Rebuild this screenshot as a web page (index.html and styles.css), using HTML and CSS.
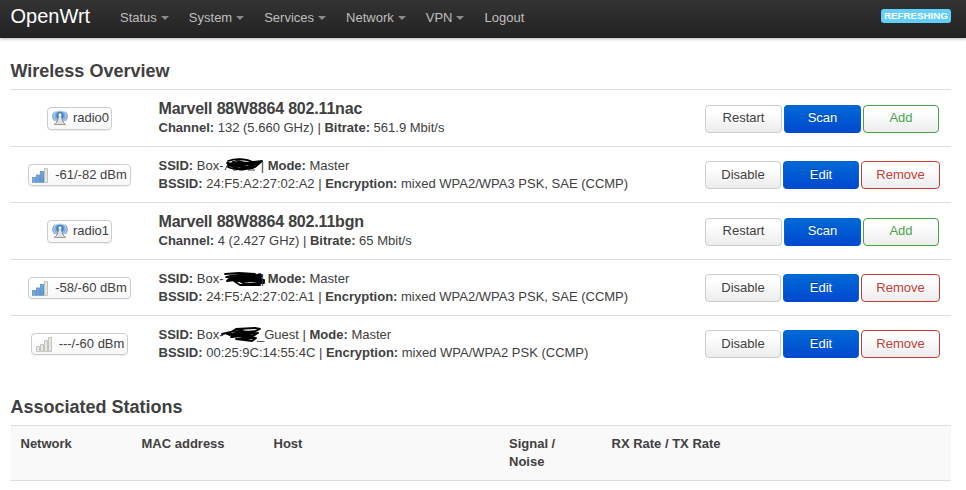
FILE: index.html
```
<!DOCTYPE html>
<html lang="en">
<head>
<meta charset="utf-8">
<title>OpenWrt - Wireless Overview</title>
<link rel="stylesheet" href="styles.css">
</head>
<body>
<svg class="defs" width="0" height="0">
  <defs>
    <linearGradient id="blue" x1="0" x2="1" y1="0" y2="1"><stop offset="0" stop-color="#91b8e2"/><stop offset="1" stop-color="#5b92d0"/></linearGradient>
    <symbol id="radio" viewBox="0 0 16 16">
      <ellipse cx="8" cy="6.5" rx="7.8" ry="6" fill="#b5cbe6"/>
      <g fill="none" stroke="#79a2d2" stroke-width="1">
        <path d="M2.6 1.5Q-1 6.3 2.6 11.2M13.4 1.5Q17 6.3 13.4 11.2"/>
        <path d="M4.8 2.2Q1.5 6 4.5 10.2M11.2 2.2Q14.5 6 11.5 10.2"/>
      </g>
      <circle cx="8" cy="5.8" r="4" fill="#4b84c6"/>
      <circle cx="8" cy="4.7" r="1.5" fill="#e7eff7"/>
      <path d="M7.5 6 4 13.7M8.5 6l3.500 7.700" fill="none" stroke="#8c9199" stroke-width="1"/>
      <path d="M7.2 6h1.6l1.700 7h-5z" fill="#dfe3e7"/>
      <path d="M2.5 13.2h11l.5 1.8H2z" fill="#9b9b98"/>
      <path d="M4 13.5h8" stroke="#ddd"/>
    </symbol>
    <symbol id="bars" viewBox="0 0 16 16">
      <path d="M0 15.500V10h4V7.500h4V4h4v11.500z" fill="url(#blue)"/>
      <path d="M.5 15.500v-5h3v5M4.500 15.500v-7h3v7M8.500 15.500v-11h3v11M0 15.500h12" fill="none" stroke="#5f90c8" stroke-opacity=".5"/>
      <path d="M12.500 1.500h3v14h-3z" fill="#e7e7e2" stroke="#c4c4be"/>
    </symbol>
  </defs>
</svg>
<header class="navbar">
  <a class="brand">OpenWrt</a>
  <nav class="menu">
    <a class="drop">Status</a><a class="drop">System</a><a class="drop">Services</a><a class="drop">Network</a><a class="drop">VPN</a><a>Logout</a>
  </nav>
  <span class="status">REFRESHING</span>
</header>
<main class="content">
  <h3>Wireless Overview</h3>
  <section class="radios">
    <div class="row device">
      <div class="cell-badge"><span class="badge"><svg class="icon" width="16" height="16"><use href="#radio"/></svg>radio0</span></div>
      <div class="info"><b class="name">Marvell 88W8864 802.11nac</b><br><b>Channel:</b> 132 (5.660 GHz) | <b>Bitrate:</b> 561.9 Mbit/s</div>
      <div class="actions"><button>Restart</button><button class="primary">Scan</button><button class="add">Add</button></div>
    </div>
    <div class="row">
      <div class="cell-badge"><span class="badge signal"><svg class="icon" width="16" height="16"><use href="#bars"/></svg>-61/-82 dBm</span></div>
      <div class="info"><b>SSID:</b> Box-<span class="redacted"><svg width="46" height="16" viewBox="0 -1 46 16"><path d="M1 12 5 4M9 12h4M15 12h5M24 12h7"/><path class="ink" d="M4 3C12 0 23 1 29 4L38 3 31 9C24 12 10 12 4 9L9 4 29 6 8 7 20 10 36 4 12 5 4 7 16 11 32 8M12 2 28 7M3 5 29 10"/></svg></span> | <b>Mode:</b> Master<br><b>BSSID:</b> 24:F5:A2:27:02:A2 | <b>Encryption:</b> mixed WPA2/WPA3 PSK, SAE (CCMP)</div>
      <div class="actions"><button>Disable</button><button class="primary">Edit</button><button class="remove">Remove</button></div>
    </div>
    <div class="row device">
      <div class="cell-badge"><span class="badge"><svg class="icon" width="16" height="16"><use href="#radio"/></svg>radio1</span></div>
      <div class="info"><b class="name">Marvell 88W8864 802.11bgn</b><br><b>Channel:</b> 4 (2.427 GHz) | <b>Bitrate:</b> 65 Mbit/s</div>
      <div class="actions"><button>Restart</button><button class="primary">Scan</button><button class="add">Add</button></div>
    </div>
    <div class="row">
      <div class="cell-badge"><span class="badge signal"><svg class="icon" width="16" height="16"><use href="#bars"/></svg>-58/-60 dBm</span></div>
      <div class="info"><b>SSID:</b> Box-<span class="redacted"><svg width="46" height="16" viewBox="0 -1 46 16"><path class="ink" d="M1 3 15 2 31 3 6 5 2 6 22 7 36 3 38 5 20 5 5 8 3 10 19 8 40 9 40 12 25 10 10 10 16 14 36 14 19 12 9 7 37 7 40 11 14 9 22 14 38 12"/></svg></span> | <b>Mode:</b> Master<br><b>BSSID:</b> 24:F5:A2:27:02:A1 | <b>Encryption:</b> mixed WPA2/WPA3 PSK, SAE (CCMP)</div>
      <div class="actions"><button>Disable</button><button class="primary">Edit</button><button class="remove">Remove</button></div>
    </div>
    <div class="row">
      <div class="cell-badge"><span class="badge signal idle"><svg class="icon" width="16" height="16" viewBox="0 0 16 16"><path d="M.5 10.500h3v5h-3zM4.500 8.500h3v7h-3zM8.500 4.500h3v11h-3zM12.500 1.500h3v14h-3z" fill="#e7e7e2" stroke="#c4c4be"/></svg>---/-60 dBm</span></div>
      <div class="info"><b>SSID:</b> Box-<span class="redacted guest"><svg width="46" height="16" viewBox="0 0 46 16"><path class="ink" d="M-2 8 7 6 12 3 31 2 36 3 30 6 9 5 3 8 17 9 34 7 29 10 10 9 7 11 21 10 32 12 15 13 25 11 9 8 20 3 5 9 32 5M12 13 28 15 32 12"/></svg></span>_Guest | <b>Mode:</b> Master<br><b>BSSID:</b> 00:25:9C:14:55:4C | <b>Encryption:</b> mixed WPA/WPA2 PSK (CCMP)</div>
      <div class="actions"><button>Disable</button><button class="primary">Edit</button><button class="remove">Remove</button></div>
    </div>
  </section>
  <h3 class="stations-title">Associated Stations</h3>
  <div class="stations">
    <b>Network</b><b>MAC address</b><b>Host</b><b>Signal /<br>Noise</b><b>RX Rate / TX Rate</b>
  </div>
</main>
</body>
</html>
```

FILE: styles.css
```
* { box-sizing: border-box; }
body {
  margin: 0;
  background: #fff;
  color: #404040;
  font: 13px/18px "Liberation Sans", Arial, sans-serif;
}
.defs { display: block; }
.navbar {
  display: flex;
  align-items: flex-start;
  height: 38px;
  padding: 0 15px 0 10.500px;
  background: linear-gradient(#333, #222);
  box-shadow: 0 1px 3px rgba(0, 0, 0, .3);
  color: #bfbfbf;
}
.brand { width: 99.500px; padding-top: 6px; color: #fff; font-size: 20px; line-height: 20px; }
.menu { display: flex; flex: 1; padding: 9px 0 0 10px; gap: 20px; }
.drop::after {
  content: "";
  display: inline-block;
  margin-left: 4px;
  vertical-align: 2px;
  border: 4px solid transparent;
  border-top-color: #8a8a8a;
  border-bottom: 0;
}
.status {
  width: 70px;
  height: 14px;
  margin-top: 9px;
  border-radius: 3px;
  background: #62cffc;
  color: #fff;
  font-size: 9.75px;
  font-weight: bold;
  line-height: 14px;
  text-align: center;
}
.content { padding: 15px 15px 0 11px; }
h3 { margin: 0 0 0 -.5px; height: 36px; font-size: 18px; line-height: 36px; }
.row {
  display: grid;
  grid-template-columns: 137px 1fr 250px;
  align-items: center;
  height: 56px;
  border-top: 1px solid #ddd;
}
.device { height: 57px; }
.cell-badge { padding-top: 2px; text-align: center; }
.badge {
  display: inline-flex;
  align-items: center;
  height: 22px;
  padding: 0 3px;
  border: 1px solid #ccc;
  border-radius: 4px;
  background: linear-gradient(#fff, #f8f8f8);
  box-shadow: 0 1px 1px rgba(0, 0, 0, .06);
}
.device .badge { height: 23px; padding: 0 2px 0 4px; }
.icon { margin-right: 5px; }
.signal .icon { margin-right: 7px; }
.idle { padding-left: 4px; }
.info { padding: 1px 0 0 10.500px; white-space: nowrap; }
.name { font-size: 16px; line-height: 18px; letter-spacing: -.18px; }
.redacted { display: inline-block; width: 33.500px; height: 16px; vertical-align: top; }
.redacted svg { display: block; overflow: visible; fill: none; stroke: #404040; }
.redacted .ink { stroke: #000; stroke-width: 1.8; stroke-linejoin: round; stroke-linecap: round; }
.actions { display: flex; justify-content: flex-end; gap: 2px; padding: 0 11px 0 0; }
.device .actions { padding: 1px 12px 0 0; }
button {
  width: 76px;
  height: 28px;
  padding: 1px 0 0;
  border: 1px solid #ccc;
  border-radius: 4px;
  background: linear-gradient(#fff 25%, #ececec);
  color: #404040;
  font: 13px/18px "Liberation Sans", Arial, sans-serif;
  text-shadow: 0 1px 1px rgba(255, 255, 255, .75);
}
.device button { width: 77px; padding: 0 0 1px; }
.remove { width: 79px; border-color: #c43c35; color: #c43c35; }
.add { border-color: #46a546; color: #46a546; }
.device .add { width: 76px; }
.primary {
  border-color: #0064cd #0064cd #004bc8;
  background: linear-gradient(#0069d6, #0049d0);
  color: #fff;
  text-shadow: 0 -1px 0 rgba(0, 0, 0, .25);
}
.stations-title { margin-top: 18px; }
.stations {
  display: grid;
  grid-template-columns: 121px 132px 235.500px 102.500px 1fr;
  height: 56px;
  padding: 9px 10px 9px 9.500px;
  border: solid #ddd;
  border-width: 1px 0;
  background: #f9f9f9;
}
```
